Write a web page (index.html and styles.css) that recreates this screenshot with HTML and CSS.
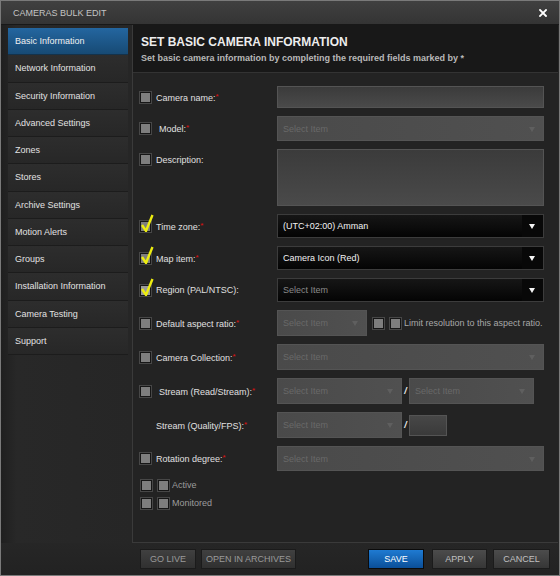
FILE: index.html
```html
<!DOCTYPE html>
<html lang="en">

<head>
    <meta charset="UTF-8">
    <meta name="viewport" content="width=device-width, initial-scale=1.0">
    <title>Cameras Bulk Edit</title>
    <link rel="stylesheet" href="styles.css">
</head>

<body>
    <div class="dialog">
        <div class="titlebar">
            <span class="title">CAMERAS BULK EDIT</span>
            <svg class="close" width="8" height="8" viewBox="0 0 8 8">
                <path d="M1 1 L7 7 M7 1 L1 7" stroke="#fff" stroke-width="1.8" stroke-linecap="square"/>
            </svg>
        </div>

        <div class="body">
            <ul class="nav">
                <li class="active">Basic Information</li>
                <li>Network Information</li>
                <li>Security Information</li>
                <li>Advanced Settings</li>
                <li>Zones</li>
                <li>Stores</li>
                <li>Archive Settings</li>
                <li>Motion Alerts</li>
                <li>Groups</li>
                <li>Installation Information</li>
                <li>Camera Testing</li>
                <li>Support</li>
            </ul>

            <div class="main">
                <div class="head">
                    <h1>SET BASIC CAMERA INFORMATION</h1>
                    <p>Set basic camera information by completing the required fields marked by *</p>
                </div>

                <div class="form">
                    <div class="row h22">
                        <div class="lbl"><span class="cb"></span><label>Camera name:<em>*</em></label></div>
                        <div class="field"><div class="text"></div></div>
                    </div>

                    <div class="row h25">
                        <div class="lbl"><span class="cb"></span><label class="pad">Model:<em>*</em></label></div>
                        <div class="field"><div class="sel off">Select Item<i class="caret"></i></div></div>
                    </div>

                    <div class="row h57 top">
                        <div class="lbl"><span class="cb"></span><label>Description:</label></div>
                        <div class="field"><div class="text area"></div></div>
                    </div>

                    <div class="row h24">
                        <div class="lbl"><span class="cb on"><svg class="tick" width="14" height="18" viewBox="0 0 14 18"><path d="M2 11 L6 17 L12.5 1" fill="none" stroke="#ecec10" stroke-width="2.4"/></svg></span><label>Time zone:<em>*</em></label></div>
                        <div class="field"><div class="sel dark">(UTC+02:00) Amman<i class="btn-caret"></i></div></div>
                    </div>

                    <div class="row h24">
                        <div class="lbl"><span class="cb on"><svg class="tick" width="14" height="18" viewBox="0 0 14 18"><path d="M2 11 L6 17 L12.5 1" fill="none" stroke="#ecec10" stroke-width="2.4"/></svg></span><label>Map item:<em>*</em></label></div>
                        <div class="field"><div class="sel dark">Camera Icon (Red)<i class="btn-caret"></i></div></div>
                    </div>

                    <div class="row h24">
                        <div class="lbl"><span class="cb on light"><svg class="tick" width="14" height="18" viewBox="0 0 14 18"><path d="M2 11 L6 17 L12.5 1" fill="none" stroke="#ecec10" stroke-width="2.4"/></svg></span><label>Region (PAL/NTSC):</label></div>
                        <div class="field"><div class="sel dark empty">Select Item<i class="btn-caret"></i></div></div>
                    </div>

                    <div class="row h26">
                        <div class="lbl"><span class="cb"></span><label>Default aspect ratio:<em>*</em></label></div>
                        <div class="field">
                            <div class="sel off w90">Select Item<i class="caret"></i></div>
                            <span class="cb ml5"></span>
                            <span class="cb ml4"></span>
                            <span class="note">Limit resolution to this aspect ratio.</span>
                        </div>
                    </div>

                    <div class="row h26">
                        <div class="lbl"><span class="cb"></span><label>Camera Collection:<em>*</em></label></div>
                        <div class="field"><div class="sel off">Select Item<i class="caret"></i></div></div>
                    </div>

                    <div class="row h26">
                        <div class="lbl"><span class="cb"></span><label class="pad">Stream (Read/Stream):<em>*</em></label></div>
                        <div class="field">
                            <div class="sel off w125">Select Item<i class="caret"></i></div>
                            <span class="slash">/</span>
                            <div class="sel off w125">Select Item<i class="caret"></i></div>
                        </div>
                    </div>

                    <div class="row h26">
                        <div class="lbl"><span class="cb none"></span><label>Stream (Quality/FPS):<em>*</em></label></div>
                        <div class="field">
                            <div class="sel off w125">Select Item<i class="caret"></i></div>
                            <span class="slash">/</span>
                            <div class="text small"></div>
                        </div>
                    </div>

                    <div class="row h25">
                        <div class="lbl"><span class="cb"></span><label>Rotation degree:<em>*</em></label></div>
                        <div class="field"><div class="sel off">Select Item<i class="caret"></i></div></div>
                    </div>

                    <div class="flag">
                        <span class="cb"></span><span class="cb ml4"></span><span class="flag-text">Active</span>
                    </div>
                    <div class="flag">
                        <span class="cb"></span><span class="cb ml4"></span><span class="flag-text">Monitored</span>
                    </div>
                </div>
            </div>
        </div>

        <div class="footer">
            <button class="btn dim w56">GO LIVE</button>
            <button class="btn dim w95 ml5">OPEN IN ARCHIVES</button>
            <button class="btn save w56 push">SAVE</button>
            <button class="btn w55 ml8">APPLY</button>
            <button class="btn w57 ml6">CANCEL</button>
        </div>
    </div>
</body>

</html>
```

FILE: styles.css
```css
html, body {
    margin: 0;
    padding: 0;
    background: #d8d8d8;
}

body {
    font-family: "Liberation Sans", Arial, sans-serif;
    font-size: 9px;
    color: #ddd;
}

.dialog {
    width: 560px;
    height: 576px;
    box-sizing: border-box;
    border: 1px solid #7a7a7a;
    background: #262626;
    display: flex;
    flex-direction: column;
}

/* title bar */
.titlebar {
    height: 23px;
    border-bottom: 1px solid #181818;
    background: linear-gradient(#404040, #343434);
    display: flex;
    align-items: center;
    padding: 0 12px;
    flex-shrink: 0;
}

.title {
    color: #c4c4c4;
    font-size: 9px;
    flex: 1;
}

.close {
    display: block;
}

/* body */
.body {
    display: flex;
    height: 518px;
    flex-shrink: 0;
}

.nav {
    list-style: none;
    margin: 0;
    padding: 3px 4px 0 7px;
    width: 120px;
    background: linear-gradient(90deg, #1f1f1f, #282828 12%, #262626);
}

.nav li {
    height: 26.25px;
    line-height: 27px;
    padding-left: 7px;
    border-bottom: 1px solid #1c1c1c;
    background: linear-gradient(#2d2d2d, #272727);
    color: #e2e2e2;
}

.nav li.active {
    background: linear-gradient(#2466a0, #174a74);
    border-bottom-color: #14324a;
    color: #f0f0f0;
}

.main {
    flex: 1;
    margin-right: 1px;
    border-left: 1px solid #3a3a3a;
    border-bottom: 1px solid #3a3a3a;
    background: #232323;
}

.head {
    height: 48px;
    background: #181818;
    border-bottom: 1px solid #333;
    padding-left: 8px;
    box-sizing: border-box;
}

.head h1 {
    margin: 0;
    padding-top: 10px;
    font-size: 12px;
    line-height: 14px;
    color: #ededed;
}

.head p {
    margin: 4px 0 0;
    font-size: 9px;
    font-weight: bold;
    color: #b8b8b8;
}

/* form */
.form {
    padding: 13px 14px 0 6px;
}

.row {
    display: flex;
    align-items: center;
    margin-bottom: 8px;
}

.row.top {
    align-items: flex-start;
}

.row.top .lbl {
    padding-top: 4px;
}

.h22 { height: 22px; }
.h24 { height: 24px; }
.h25 { height: 25px; }
.h26 { height: 26px; }
.h57 { height: 57px; }

.lbl {
    width: 138px;
    display: flex;
    align-items: center;
    flex-shrink: 0;
}

.lbl label {
    color: #e0e0e0;
    margin-left: 4px;
}

.lbl label.pad {
    margin-left: 7px;
}

.lbl em {
    font-style: normal;
    color: #e01010;
    vertical-align: 2px;
    font-size: 8px;
}

.field {
    flex: 1;
    height: 100%;
    display: flex;
    align-items: center;
}

.cb {
    display: inline-block;
    position: relative;
    width: 13px;
    height: 13px;
    box-sizing: border-box;
    border: 1px solid #474747;
    box-shadow: inset 0 0 0 1px #161616;
    background: #7e7e7e;
    flex-shrink: 0;
}

.cb.light {
    background: #9a9a9a;
}

.cb.none {
    visibility: hidden;
}

.tick {
    position: absolute;
    left: 0;
    top: -7px;
}

.ml4 { margin-left: 4px; }
.ml5 { margin-left: 5px; }
.ml6 { margin-left: 6px; }
.ml8 { margin-left: 8px; }

.text {
    width: 100%;
    height: 100%;
    box-sizing: border-box;
    border: 1px solid #545454;
    background: linear-gradient(#3b3b3b, #4a4a4a);
}

.text.small {
    width: 38px;
    height: 21px;
    flex: none;
    background: linear-gradient(#474747, #3a3a3a);
}

.sel {
    position: relative;
    width: 100%;
    height: 100%;
    box-sizing: border-box;
    display: flex;
    align-items: center;
    padding-left: 5px;
}

.sel.off {
    border: 1px solid #545454;
    background: linear-gradient(90deg, #4a4a4a, #505050);
    color: #696969;
}

.sel.dark {
    border: 1px solid #3c3c3c;
    background: linear-gradient(#161616, #040404);
    color: #f2f2f2;
}

.sel.dark.empty {
    color: #8a8a8a;
}

.w90 { width: 90px; flex: none; }
.w125 { width: 125px; flex: none; }

.caret {
    position: absolute;
    right: 8px;
    top: 50%;
    margin-top: -2px;
    border-left: 3px solid transparent;
    border-right: 3px solid transparent;
    border-top: 5px solid #5f5f5f;
}

.btn-caret {
    position: absolute;
    right: 0;
    top: 0;
    bottom: 0;
    width: 21px;
    background: #080808;
}

.btn-caret::after {
    content: "";
    position: absolute;
    left: 7px;
    top: 50%;
    margin-top: -2px;
    border-left: 3.5px solid transparent;
    border-right: 3.5px solid transparent;
    border-top: 5px solid #f4f4f4;
}

.note {
    margin-left: 2px;
    color: #a8a8a8;
    white-space: nowrap;
}

.slash {
    width: 7px;
    text-align: center;
    color: #f0f0f0;
    font-weight: bold;
    font-style: italic;
}

.flag {
    display: flex;
    align-items: center;
    height: 12px;
    margin-bottom: 6px;
    padding-left: 1px;
}

.flag-text {
    margin-left: 2px;
    color: #9c9c9c;
}

/* footer */
.footer {
    flex: 1;
    display: flex;
    align-items: flex-start;
    padding: 6px 9px 0 139px;
    background: linear-gradient(#262626, #222);
}

.btn {
    height: 20px;
    padding: 0;
    border: 1px solid #1b1b1b;
    background: linear-gradient(#4c4c4c, #363636);
    color: #c0c0c0;
    font-family: "Liberation Sans", Arial, sans-serif;
    font-size: 9px;
}

.btn.dim {
    color: #9a9a9a;
    background: linear-gradient(#404040, #303030);
}

.btn.save {
    background: linear-gradient(#1f7bd2, #0b4f98);
    border-color: #0b0b0b;
    color: #fff;
}

.push { margin-left: auto; }
.w55 { width: 55px; }
.w56 { width: 56px; }
.w57 { width: 57px; }
.w95 { width: 95px; }
```
